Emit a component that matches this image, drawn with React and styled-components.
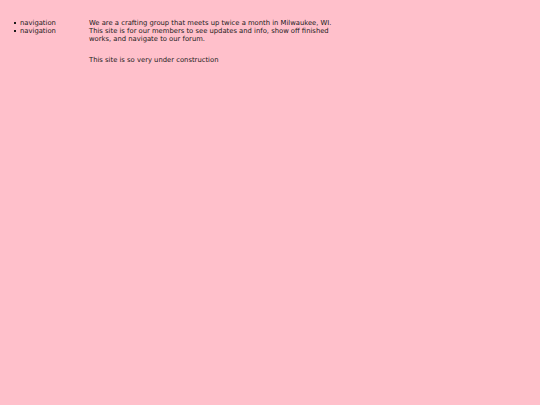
import React from "react";
import styled, { createGlobalStyle } from "styled-components";

const Global = createGlobalStyle`
  html, body {
    margin: 0;
    background: #ffc0cb;
  }
  body {
    padding: 4px;
    font-family: "DejaVu Sans", Verdana, sans-serif;
    font-size: 6.8px;
    line-height: 8px;
    color: #1a1a1a;
  }
`;

const Page = styled.div`
  display: flex;
  padding-top: 15px;
`;

const Nav = styled.ul`
  width: 69px;
  margin: 0;
  padding-left: 16px;
  list-style: none;
`;

const NavItem = styled.li`
  position: relative;
  &::before {
    content: "";
    position: absolute;
    left: -6px;
    top: 3px;
    width: 2px;
    height: 2px;
    background: #1a1a1a;
  }
`;

const Content = styled.div`
  width: 248px;
`;

const Para = styled.p`
  margin: 0 0 13px;
`;

export default function App() {
  return (
    <>
      <Global />
      <Page>
        <Nav>
          <NavItem>navigation</NavItem>
          <NavItem>navigation</NavItem>
        </Nav>
        <Content>
          <Para>
            We are a crafting group that meets up twice a month in Milwaukee, WI.
            This site is for our members to see updates and info, show off finished
            works, and navigate to our forum.
          </Para>
          <Para>This site is so very under construction</Para>
        </Content>
      </Page>
    </>
  );
}
